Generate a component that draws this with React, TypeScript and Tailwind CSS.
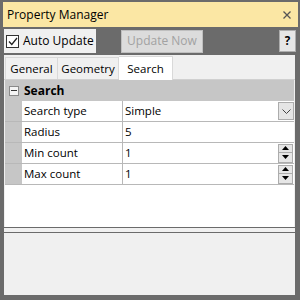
import React from "react";

const font = { fontFamily: '"Segoe UI", "Open Sans", "Noto Sans", sans-serif' };

function SpinBox() {
  return (
    <div className="w-[15px] h-[19px] flex flex-col mr-[1px]">
      <div className="h-[9px] bg-[#e6e6e6] border border-[#acacac] flex items-center justify-center">
        <svg width="7" height="4" viewBox="0 0 7 4"><path d="M0 4 L3.5 0 L7 4 Z" fill="#000" /></svg>
      </div>
      <div className="h-[10px] bg-[#e6e6e6] border border-t-0 border-[#acacac] flex items-center justify-center">
        <svg width="7" height="4" viewBox="0 0 7 4"><path d="M0 0 L3.5 4 L7 0 Z" fill="#000" /></svg>
      </div>
    </div>
  );
}

function Row({ label, value, extra }: { label: string; value: string; extra?: React.ReactNode }) {
  return (
    <div className="flex h-[21px] border-b border-[#b8b8b8]">
      <div className="w-[17px] bg-[#c6c6c6]" />
      <div className="w-[101px] border-r border-[#b8b8b8] pl-[2px] flex items-center text-black">{label}</div>
      <div className="flex-1 pl-[2px] flex items-center justify-between text-black">
        <span>{value}</span>
        {extra}
      </div>
    </div>
  );
}

export default function App() {
  return (
    <div className="w-[300px] h-[300px] bg-[#6b6b6b] pt-[2px] pl-[3px] pr-[2px] flex flex-col text-[11.5px]" style={font}>
      <div className="h-[25px] bg-[#fbe7a4] flex items-center justify-between pl-[4px] pr-[7px] text-black text-[12px]">
        <span>Property Manager</span>
        <svg width="8" height="8" viewBox="0 0 8 8"><path d="M0.5 0.5 L7.5 7.5 M7.5 0.5 L0.5 7.5" stroke="#555" strokeWidth="1.3" /></svg>
      </div>
      <div className="h-[28px] flex items-center">
        <div className="ml-[1px] w-[92px] h-[24px] bg-[#f0f0f0] flex items-center pl-[2px] text-[12px]">
          <div className="w-[13px] h-[13px] bg-white border border-[#333] flex items-center justify-center">
            <svg width="10" height="9" viewBox="0 0 10 9"><path d="M1 4.5 L3.8 7.5 L9 1" stroke="#222" strokeWidth="1.3" fill="none" /></svg>
          </div>
          <span className="ml-[4px] text-black">Auto Update</span>
        </div>
        <div className="ml-[25px] w-[82px] h-[23px] bg-[#dcdcdc] border border-[#bfbfbf] flex items-center justify-center text-[#a2a2a2] text-[12px]">
          Update Now
        </div>
        <div className="ml-auto mr-[2px] w-[17px] h-[22px] bg-[#e6e6e6] border border-[#adadad] flex items-center justify-center font-bold text-black">
          ?
        </div>
      </div>
      <div className="flex-1 mr-[3px] ml-[1px] mb-[5px] bg-[#f0f0f0] flex flex-col">
        <div className="h-[25px] flex items-end pl-[1px] border-b border-[#d0d0d0]">
          <div className="h-[22px] w-[53px] border border-b-0 border-[#d9d9d9] flex items-center justify-center text-black">General</div>
          <div className="h-[22px] w-[61px] border border-l-0 border-b-0 border-[#d9d9d9] flex items-center justify-center text-black">Geometry</div>
          <div className="h-[24px] w-[54px] bg-white border border-l-0 border-b-0 border-[#d9d9d9] flex items-center justify-center text-black mb-[-1px]">Search</div>
        </div>
        <div className="flex-1 bg-white mx-[1px] flex flex-col">
          <div className="h-[21px] bg-[#c6c6c6] flex items-center">
            <div className="w-[17px] flex items-center justify-center">
              <div className="w-[10px] h-[10px] border border-[#8a8a8a] bg-[#f4f4f4] flex items-center justify-center">
                <div className="w-[6px] h-[1px] bg-[#333]" />
              </div>
            </div>
            <span className="ml-[2px] font-bold text-black text-[12px]">Search</span>
          </div>
          <Row
            label="Search type"
            value="Simple"
            extra={
              <div className="w-[16px] h-[18px] bg-[#e5e5e5] border border-[#acacac] flex items-center justify-center">
                <svg width="9" height="5" viewBox="0 0 9 5"><path d="M0.5 0.5 L4.5 4.5 L8.5 0.5" stroke="#444" strokeWidth="1" fill="none" /></svg>
              </div>
            }
          />
          <Row label="Radius" value="5" />
          <Row label="Min count" value="1" extra={<SpinBox />} />
          <Row label="Max count" value="1" extra={<SpinBox />} />
          <div className="flex-1" />
        </div>
        <div className="h-[1px] bg-[#6b6b6b]" />
        <div className="h-[4px] bg-[#f0f0f0]" />
        <div className="h-[1px] bg-[#6b6b6b]" />
        <div className="h-[62px] bg-[#f0f0f0]" />
      </div>
    </div>
  );
}
